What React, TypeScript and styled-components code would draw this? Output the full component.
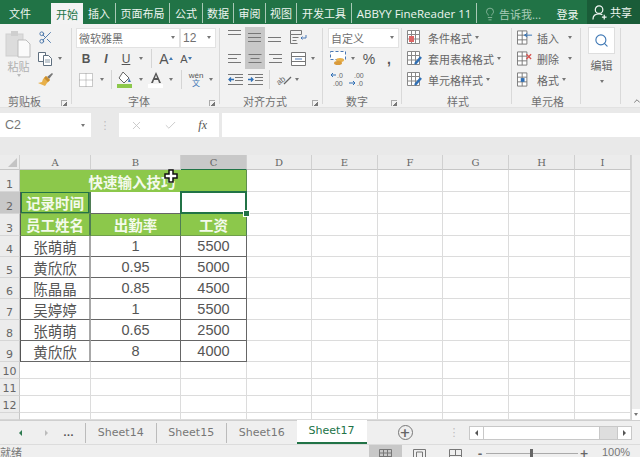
import React from 'react';
import styled, { createGlobalStyle } from 'styled-components';
import { Lightbulb, Scissors, Search, X, Check, ChevronUp } from 'lucide-react';

const CJK = '"Noto Sans CJK SC", "Liberation Sans", sans-serif';
const LATIN = '"DejaVu Sans", "Noto Sans CJK SC", sans-serif';
const GREEN = '#217346';
const FILL = '#8cc84b';

const GlobalStyle = createGlobalStyle`
  html, body { margin: 0; padding: 0; background: #fff; overflow: hidden; }
  #root { width: 640px; height: 457px; overflow: hidden; }
`;

const Page = styled.div`
  width: 640px;
  height: 457px;
  overflow: hidden;
  display: flex;
  flex-direction: column;
  font-family: ${CJK};
  color: #444;
`;

/* title bar */
const TitleBar = styled.div`
  height: 24px;
  flex: none;
  background: ${GREEN};
  display: flex;
  align-items: flex-end;
  color: #eef5f0;
  font-size: 11px;
`;
const MenuTab = styled.div<{ $w: number; $active?: boolean; $sep?: boolean }>`
  width: ${p => p.$w}px;
  flex: none;
  height: ${p => (p.$active ? 21 : 20)}px;
  margin-bottom: ${p => (p.$active ? 0 : 1)}px;
  display: flex;
  align-items: center;
  justify-content: center;
  box-sizing: border-box;
  white-space: nowrap;
  border-right: ${p => (p.$sep ? '1px solid #a9c9b6' : 'none')};
  background: ${p => (p.$active ? '#f3f3f3' : 'transparent')};
  color: ${p => (p.$active ? GREEN : 'inherit')};
`;
const AbbyyLabel = styled.span`
  font-family: "Open Sans", sans-serif;
  font-size: 11.5px;
`;
const TellMe = styled.div`
  width: 74px;
  flex: none;
  height: 21px;
  display: flex;
  align-items: center;
  gap: 2px;
  padding-left: 6px;
  box-sizing: border-box;
  color: #a9cdb8;
`;
const Login = styled.div`
  width: 33px;
  flex: none;
  height: 21px;
  display: flex;
  align-items: center;
  justify-content: center;
`;
const Share = styled.div`
  margin-left: auto;
  width: 53px;
  height: 24px;
  box-sizing: border-box;
  padding-left: 5px;
  background: #1a5c38;
  display: flex;
  align-items: center;
  gap: 2px;
`;

/* ribbon */
const Ribbon = styled.div`
  height: 84px;
  flex: none;
  background: #f2f2f2;
  display: flex;
  border-bottom: 1px solid #e2e2e2;
  box-sizing: border-box;
`;
const Group = styled.section<{ $w: number; $pad: number }>`
  width: ${p => p.$w}px;
  flex: none;
  box-sizing: border-box;
  padding-left: ${p => p.$pad}px;
  display: flex;
  flex-direction: column;
  position: relative;
  &::after {
    content: '';
    position: absolute;
    right: 0;
    top: 4px;
    bottom: 3px;
    width: 1px;
    background: #d9d9d9;
  }
`;
const GroupBody = styled.div`
  height: 66px;
  padding-top: 3px;
  display: flex;
  flex: none;
`;
const Stack = styled.div`
  display: flex;
  flex-direction: column;
`;
const ToolRow = styled.div<{ $h?: number }>`
  display: flex;
  align-items: center;
  height: ${p => p.$h ?? 21}px;
`;
const Tool = styled.div<{ $w: number; $on?: boolean }>`
  width: ${p => p.$w}px;
  height: 100%;
  flex: none;
  display: flex;
  align-items: center;
  justify-content: center;
  background: ${p => (p.$on ? '#c8c8c8' : 'transparent')};
  color: #555;
  font-size: 12px;
`;
const Letter = styled.span<{ $bold?: boolean; $italic?: boolean; $under?: boolean; $size?: number }>`
  font-family: "Liberation Sans", sans-serif;
  font-size: ${p => p.$size ?? 12}px;
  font-weight: ${p => (p.$bold ? 700 : 400)};
  font-style: ${p => (p.$italic ? 'italic' : 'normal')};
  text-decoration: ${p => (p.$under ? 'underline' : 'none')};
  color: #555;
`;
const PhoneticLetter = styled.span`
  font-family: "Liberation Sans", "Noto Sans CJK SC", sans-serif;
  font-size: 8px;
  line-height: 8px;
  text-align: center;
  color: #555;
`;
const PhoneticBase = styled.span`
  display: block;
  color: #3f78b5;
`;
const Caret = styled.i<{ $up?: boolean; $color?: string }>`
  display: block;
  width: 0;
  height: 0;
  border-left: 2.5px solid transparent;
  border-right: 2.5px solid transparent;
  ${p =>
    p.$up
      ? `border-bottom: 3px solid ${p.$color ?? '#777'};`
      : `border-top: 3px solid ${p.$color ?? '#777'};`}
`;
const ToolSep = styled.div`
  width: 1px;
  height: 19px;
  background: #d5d5d5;
`;
const ComboBox = styled.div<{ $w: number }>`
  width: ${p => p.$w}px;
  height: 20px;
  flex: none;
  box-sizing: border-box;
  background: #fff;
  border: 1px solid #e2e2e2;
  display: flex;
  align-items: center;
  justify-content: space-between;
  padding: 0 4px 0 2px;
  font-size: 11px;
  color: #707070;
`;
const SizeValue = styled.span`
  font-family: "Liberation Sans", sans-serif;
  font-size: 12px;
`;
const GroupLabel = styled.div<{ $left: number }>`
  display: grid;
  grid-template-columns: ${p => p.$left}px auto 1fr;
  align-items: center;
  height: 16px;
  font-size: 11px;
  color: #707070;
`;
const Launcher = styled.i`
  grid-column: 3;
  justify-self: end;
  display: block;
  width: 5px;
  height: 5px;
  margin: 3px 5px 0 0;
  border-left: 1px solid #aaa;
  border-top: 1px solid #aaa;
  background: linear-gradient(135deg, transparent 55%, #777 55%);
`;
const PasteColumn = styled.div`
  width: 33px;
  flex: none;
  display: flex;
  flex-direction: column;
  align-items: center;
  color: #b0b0b0;
  font-size: 11px;
  line-height: 14px;
  padding-top: 3px;
  gap: 1px;
`;
const CommandRow = styled(ToolRow)`
  font-size: 11px;
  color: #666;
`;
const CommandIcon = styled.div<{ $w: number; $gap: number }>`
  width: ${p => p.$w}px;
  margin-right: ${p => p.$gap}px;
  flex: none;
  display: flex;
  justify-content: center;
`;
const CommandCaret = styled.div<{ $left: number }>`
  margin-left: ${p => p.$left}px;
`;
const EditColumn = styled.div`
  width: 27px;
  flex: none;
  display: flex;
  flex-direction: column;
  align-items: center;
  font-size: 11px;
  color: #666;
`;
const EditButton = styled.div`
  width: 27px;
  height: 27px;
  box-sizing: border-box;
  background: #fff;
  border: 1px solid #dedede;
  display: flex;
  align-items: center;
  justify-content: center;
  margin-bottom: 3px;
`;
const EditCaret = styled.div`
  margin-top: 7px;
`;
const CollapseCell = styled.div`
  flex: 1;
  display: flex;
  align-items: flex-end;
  justify-content: center;
  padding-bottom: 1px;
  padding-left: 11px;
`;

/* formula bar */
const FormulaBar = styled.div`
  height: 47px;
  flex: none;
  box-sizing: border-box;
  padding: 5px 0 0;
  background: #e9e9e9;
  display: flex;
  align-items: flex-start;
`;
const NameBox = styled.div`
  width: 91px;
  height: 24px;
  flex: none;
  box-sizing: border-box;
  background: #fff;
  display: flex;
  align-items: center;
  justify-content: space-between;
  padding: 0 6px 0 5px;
  font-family: "Liberation Sans", sans-serif;
  font-size: 12.5px;
  color: #777;
`;
const Grip = styled.div`
  width: 28px;
  height: 24px;
  flex: none;
  display: flex;
  align-items: center;
  justify-content: center;
  color: #bbb;
  font-size: 11px;
  font-family: ${LATIN};
`;
const FxBox = styled.div`
  width: 100px;
  height: 24px;
  flex: none;
  background: #fff;
  display: flex;
  align-items: center;
  justify-content: space-between;
  box-sizing: border-box;
  padding: 0 12px 0 11px;
`;
const FxLabel = styled.span`
  font-family: "Liberation Serif", serif;
  font-style: italic;
  font-size: 12px;
  color: #555;
`;
const FormulaInput = styled.div`
  flex: 1;
  height: 24px;
  margin-left: 3px;
  background: #fff;
`;

/* sheet */
const SheetArea = styled.div`
  display: flex;
  height: 265px;
  flex: none;
`;
const SheetGrid = styled.div`
  width: 631px;
  flex: none;
  position: relative;
  display: grid;
  grid-template-columns: 20px 71px 90px 66px 65px 66px 65px 66px 66px 56px;
  grid-template-rows: 15px 22px 22px 22px repeat(6, 21px) 17px 17px 17px 7px;
  overflow: hidden;
  background: #fff;
`;
const ColHead = styled.div<{ $on?: boolean }>`
  box-sizing: border-box;
  background: ${p => (p.$on ? '#c8c8c8' : '#ececec')};
  border-right: 1px solid #d0d0d0;
  border-bottom: ${p => (p.$on ? `1px solid ${GREEN}` : '1px solid #c6c6c6')};
  display: flex;
  align-items: center;
  justify-content: center;
  font-family: "DejaVu Serif", serif;
  font-size: 10px;
  color: #666;
`;
const Corner = styled(ColHead)`
  justify-content: flex-end;
  align-items: flex-end;
  padding: 0 2px 2px 0;
`;
const CornerMark = styled.i`
  display: block;
  width: 0;
  height: 0;
  border-left: 9px solid transparent;
  border-bottom: 9px solid #c4c4c4;
`;
const RowHead = styled.div<{ $on?: boolean; $clipped?: boolean }>`
  box-sizing: border-box;
  background: ${p => (p.$on ? '#c8c8c8' : '#ececec')};
  border-right: 1px solid #c6c6c6;
  border-bottom: 1px solid #d6d6d6;
  display: flex;
  align-items: ${p => (p.$clipped ? 'flex-start' : 'flex-end')};
  padding-top: ${p => (p.$clipped ? 4 : 0)}px;
  justify-content: center;
  overflow: hidden;
  font-family: ${LATIN};
  font-size: 11px;
  line-height: 13px;
  color: #666;
`;
const Blank = styled.div`
  box-sizing: border-box;
  border-right: 1px solid #dcdcdc;
  border-bottom: 1px solid #dcdcdc;
`;
const Merged = styled.div`
  grid-column: 2 / span 3;
  box-sizing: border-box;
  background: ${FILL};
  border-right: 1px solid #5f8f4c;
  color: #f4faec;
  font-size: 14.5px;
  font-weight: 700;
  display: flex;
  align-items: center;
  justify-content: center;
  padding-right: 2px;
`;
const Cell = styled.div<{ $head?: boolean; $selected?: boolean; $current?: boolean }>`
  box-sizing: border-box;
  position: relative;
  display: flex;
  align-items: center;
  justify-content: center;
  font-size: 14.5px;
  font-family: "Liberation Sans", "Noto Sans CJK SC", sans-serif;
  white-space: nowrap;
  background: ${p => (p.$head ? FILL : '#fff')};
  color: ${p => (p.$head ? '#f4faec' : '#555')};
  font-weight: ${p => (p.$head ? 700 : 400)};
  border-right: 1px solid ${p => (p.$head ? '#4f7d55' : '#666')};
  border-bottom: 1px solid ${p => (p.$head ? '#6f9f4a' : '#666')};
  ${p => p.$current && `box-shadow: inset 0 0 0 1px ${GREEN};`}
  ${p =>
    p.$selected &&
    `&::before {
      content: '';
      position: absolute;
      inset: -1px -1px -1px -1px;
      border: 2px solid ${GREEN};
      z-index: 1;
    }`}
`;
const FirstCell = styled(Cell)`
  border-left: 1px solid #555;
  border-right: 2px solid ${p => (p.$head ? '#4f7d55' : '#a8a8a8')};
`;
const FillHandle = styled.i`
  position: absolute;
  right: -4px;
  bottom: -4px;
  width: 5px;
  height: 5px;
  background: ${GREEN};
  border: 1px solid #fff;
  box-sizing: content-box;
  z-index: 2;
`;
const CursorMark = styled.svg`
  position: absolute;
  left: 164px;
  top: 14px;
  z-index: 3;
`;
const VScroll = styled.div`
  flex: 1;
  background: #ececec;
  border-left: 1px solid #d4d4d4;
  display: flex;
  align-items: flex-end;
`;
const VScrollButton = styled.div`
  width: 100%;
  height: 11px;
  background: #fff;
  display: flex;
  justify-content: center;
  align-items: center;
`;

/* sheet tabs */
const TabsBar = styled.div`
  height: 25px;
  flex: none;
  box-sizing: border-box;
  background: #efefef;
  border-top: 1px solid #cfcfcf;
  border-bottom: 1px solid #dcdcdc;
  display: flex;
  align-items: center;
  font-family: ${LATIN};
  font-size: 11px;
  color: #777;
`;
const NavCell = styled.div<{ $w: number }>`
  width: ${p => p.$w}px;
  flex: none;
  display: flex;
  justify-content: center;
  align-items: center;
  font-weight: 700;
  font-size: 9px;
  color: #555;
`;
const SideCaret = styled.i<{ $right?: boolean; $color?: string }>`
  display: block;
  width: 0;
  height: 0;
  border-top: 3px solid transparent;
  border-bottom: 3px solid transparent;
  ${p =>
    p.$right
      ? `border-left: 3px solid ${p.$color ?? '#555'};`
      : `border-right: 3px solid ${p.$color ?? '#555'};`}
`;
const SheetTab = styled.div<{ $active?: boolean }>`
  width: ${p => (p.$active ? 70 : 70.5)}px;
  height: ${p => (p.$active ? 24 : 20)}px;
  flex: none;
  box-sizing: border-box;
  display: flex;
  align-items: center;
  justify-content: center;
  border-left: ${p => (p.$active ? 'none' : '1px solid #bbb')};
  background: ${p => (p.$active ? '#fff' : 'transparent')};
  color: ${p => (p.$active ? GREEN : '#777')};
  border-bottom: ${p => (p.$active ? `2px solid ${GREEN}` : 'none')};
  margin-top: ${p => (p.$active ? -2 : 0)}px;
`;
const AddSheet = styled.div`
  width: 15px;
  height: 15px;
  flex: none;
  box-sizing: border-box;
  margin-left: 31px;
  border: 1px solid #777;
  border-radius: 50%;
  display: flex;
  align-items: center;
  justify-content: center;
  font-size: 13px;
  line-height: 1;
  font-weight: 700;
  color: #666;
`;
const TabGrip = styled.div`
  margin-left: 36px;
  width: 10px;
  flex: none;
  text-align: center;
  font-size: 11px;
  color: #bbb;
`;
const HScroll = styled.div`
  margin-left: 10px;
  width: 163px;
  height: 14px;
  flex: none;
  box-sizing: border-box;
  border: 1px solid #c8c8c8;
  background: #dedede;
  display: flex;
`;
const HScrollEnd = styled.div`
  width: 13px;
  flex: none;
  background: #fff;
  display: flex;
  align-items: center;
  justify-content: center;
`;
const HScrollThumb = styled.div`
  width: 117px;
  flex: none;
  background: #fff;
  border-left: 1px solid #c8c8c8;
  border-right: 1px solid #c8c8c8;
  box-sizing: border-box;
`;
const HScrollTrack = styled.div`
  flex: 1;
  border-right: 1px solid #c8c8c8;
`;

/* status bar */
const StatusBar = styled.div`
  flex: 1;
  background: #efefef;
  display: flex;
  align-items: flex-start;
  font-size: 11px;
  color: #777;
  overflow: hidden;
`;
const ReadyText = styled.div`
  width: 369px;
  flex: none;
  line-height: 14px;
`;
const ViewButton = styled.div<{ $on?: boolean; $w: number }>`
  width: ${p => p.$w}px;
  height: 12px;
  flex: none;
  background: ${p => (p.$on ? '#c8c8c8' : 'transparent')};
  display: flex;
  justify-content: center;
  padding-top: 4px;
  box-sizing: border-box;
`;
const ZoomSign = styled.div`
  width: 12px;
  flex: none;
  text-align: center;
  line-height: 18px;
  font-family: ${LATIN};
  font-weight: 700;
  color: #666;
`;
const ZoomTrack = styled.div`
  width: 92px;
  height: 10px;
  flex: none;
  position: relative;
  &::before {
    content: '';
    position: absolute;
    left: 0;
    right: 0;
    top: 8px;
    height: 1px;
    background: #aaa;
  }
`;
const ZoomThumb = styled.i`
  position: absolute;
  left: 44px;
  top: 4px;
  width: 3px;
  height: 9px;
  background: #666;
`;
const ZoomText = styled.div`
  margin-left: 12px;
  font-family: "Liberation Sans", sans-serif;
  font-size: 11px;
  line-height: 14px;
`;

/* drawn icons */
const PasteIcon = () => (
  <svg width="27" height="28" viewBox="0 0 27 28">
    <rect x="1" y="4" width="17" height="22" fill="#dcdcdc" stroke="#cfcfcf" />
    <rect x="6" y="1" width="7" height="5" fill="#cfcfcf" />
    <path d="M13 10h8l4 4v13H13z" fill="#fafafa" stroke="#bdbdbd" />
  </svg>
);
const CopyIcon = () => (
  <svg width="16" height="14" viewBox="0 0 16 14" fill="#fff" stroke="#5f6f7f">
    <path d="M1.500.5h7v9h-7z" />
    <path d="M6.500 3.500h5l3 3v7h-8z" />
    <path d="M8 8h5M8 10h5" stroke="#8a9aa8" />
  </svg>
);
const BrushIcon = () => (
  <svg width="17" height="16" viewBox="0 0 17 16">
    <path d="M10 5l2 2 4-5-1-1z" fill="#777" />
    <path d="M9 4l4 4-3 3-2 3-7-3 4-1 1-3z" fill="#e8b04a" />
    <path d="M9 4l4 4-2 2-4-4z" fill="#c98d2e" />
  </svg>
);
const GridIcon = () => (
  <svg width="14" height="14" viewBox="0 0 14 14" fill="#fff" stroke="#999" strokeDasharray="1 1">
    <path d="M.5.5h13v13H.5zM7 .5v13M.5 7h13" />
  </svg>
);
const FillIcon = () => (
  <svg width="16" height="17" viewBox="0 0 16 17">
    <path d="M6 1l6 6-5 5-5-5z" fill="#fff" stroke="#666" />
    <path d="M12 7l2 4h-3z" fill="#4a78b5" />
    <rect y="13" width="15" height="4" fill="#8cc84b" />
  </svg>
);
const FontColorIcon = () => (
  <svg width="16" height="17" viewBox="0 0 16 17">
    <path d="M8 1L3 12h2l1-3h4l1 3h2zM7 7l1-3 1 3z" fill="#555" />
    <rect y="13" width="15" height="4" fill="#fff" />
  </svg>
);
const Lines = ({ widths, ind = 0, y = 0 }: { widths: number[]; ind?: number; y?: number }) => (
  <svg width="14" height="11" viewBox="0 0 14 11" stroke="#777" style={{ transform: `translateY(${y}px)` }}>
    {widths.map((w, i) => (
      <path key={i} d={`M${ind === 1 ? 14 - w : ind === 2 ? (14 - w) / 2 : 0} ${1.5 + i * 4}h${w}`} />
    ))}
  </svg>
);
const WrapIcon = () => (
  <svg width="17" height="15" viewBox="0 0 17 15" fill="none" stroke="#777">
    <path d="M.5.5h11v4H.5zM.5 4.500v9h7M2.500 7.500h6M2.500 10.500h4" />
    <path d="M16 5v3h-5M12.500 6.500L11 8l1.500 1.500" stroke="#4a78b5" />
  </svg>
);
const MergeIcon = () => (
  <svg width="15" height="14" viewBox="0 0 15 14" fill="#fff" stroke="#777">
    <path d="M.5.5h14v13H.5zM.5 4.500h14M.5 9.500h14" />
    <path d="M4 7h7" stroke="#4a78b5" />
  </svg>
);
const IndentIcon = ({ out }: { out?: boolean }) => (
  <svg width="15" height="11" viewBox="0 0 15 11" fill="none" stroke="#777">
    <path d="M0 .5h15M7 3.500h8M7 6.500h8M0 10.500h15" />
    <path d={out ? 'M6 5.500H1M3 3.500l-2 2 2 2' : 'M0 5.500h5M3 3.500l2 2-2 2'} stroke="#2f6fb5" strokeWidth="1.300" />
  </svg>
);
const OrientIcon = () => (
  <svg width="17" height="15" viewBox="0 0 17 15">
    <text x="1" y="11" fontSize="8" fill="#666" fontFamily="Liberation Sans" transform="rotate(-40 6 8)">ab</text>
    <path d="M9 12L16 5" stroke="#666" strokeWidth="1.300" />
  </svg>
);
const AccountingIcon = () => (
  <svg width="16" height="15" viewBox="0 0 16 15">
    <rect x=".5" y=".5" width="15" height="8" fill="#fff" stroke="#4a78b5" strokeDasharray="3 2" />
    <ellipse cx="10" cy="9" rx="4" ry="2" fill="#e8b04a" />
    <ellipse cx="8" cy="12" rx="4" ry="2" fill="#d99a3a" />
  </svg>
);
const DecimalIcon = ({ less }: { less?: boolean }) => (
  <svg width="16" height="15" viewBox="0 0 16 15" fontFamily="Liberation Sans" fontSize="7" fill="#666">
    <text x={less ? 7 : 5} y="6">{less ? '.0' : '.00'}</text>
    <text x={less ? 3 : 8} y="14">{less ? '.00' : '.0'}</text>
    <path d={less ? 'M6 3H1M3 1L1 3l2 2' : 'M0 11h6M4 9l2 2-2 2'} fill="none" stroke="#2f6fb5" />
  </svg>
);
const TableStyleIcon = ({ brush }: { brush?: boolean }) => (
  <svg width="16" height="15" viewBox="0 0 16 15" fill="#fff" stroke="#888">
    <path d="M.5.500h12v13H.5zM.5 4.500h12M.5 9h12M4.500.5v13M8.500.5v13" />
    {brush ? <path d="M14 6l-6 7" stroke="#2f6fb5" strokeWidth="2.500" /> : <rect x="2" y="6" width="5" height="6" fill="#d66" stroke="none" />}
  </svg>
);
const CellsIcon = ({ mode }: { mode: 'in' | 'out' | 'fmt' }) => (
  <svg width="17" height="15" viewBox="0 0 17 15" fill="#fff" stroke="#777">
    <path d="M.5.500h10v14H.5zM.5 5h10M.5 10h10M5.500.5v14" />
    {mode === 'in' && <path d="M8 5h8M11 3L8 5l3 2" stroke="#2f6fb5" fill="none" />}
    {mode === 'out' && <path d="M10 3l5 5m0-5l-5 5" stroke="#d9534f" fill="none" strokeWidth="1.400" />}
    {mode === 'fmt' && <rect x="4" y="6" width="4" height="4" fill="#2f6fb5" stroke="none" />}
  </svg>
);
const ShareIcon = () => (
  <svg width="16" height="17" viewBox="0 0 17 17" fill="none" stroke="#f2f7f4" strokeWidth="1.300">
    <circle cx="7.500" cy="5.500" r="4" />
    <path d="M1 16c0-4 3-6 6.500-6 1.500 0 2.500.3 3.500 1M13 11v5M10.500 13.500h5" />
  </svg>
);
const ViewIcon = ({ kind }: { kind: 'normal' | 'page' | 'brk' }) => (
  <svg width="13" height="12" viewBox="0 0 13 12" fill="none" stroke="#777">
    <path d="M.5.500h12v11H.5z" />
    {kind === 'normal' && <path d="M.5 4h12M.5 7.500h12M4.500.5v11M8.500.5v11" />}
    {kind === 'page' && <path d="M3.500 3h6v8h-6z" />}
    {kind === 'brk' && <path d="M6.500.5v6M.5 6.500h12" />}
  </svg>
);

type RowData = [string, string, string];
const ROWS: RowData[] = [
  ['张萌萌', '1', '5500'],
  ['黄欣欣', '0.95', '5000'],
  ['陈晶晶', '0.85', '4500'],
  ['吴婷婷', '1', '5500'],
  ['张萌萌', '0.65', '2500'],
  ['黄欣欣', '8', '4000'],
];
const COLS = ['A', 'B', 'C', 'D', 'E', 'F', 'G', 'H', 'I'];

const blanks = (n: number, prefix: string) =>
  Array.from({ length: n }, (_, i) => <Blank key={`${prefix}-${i}`} />);

const App: React.FC = () => (
  <Page>
    <GlobalStyle />
    <TitleBar>
      <MenuTab $w={40}>文件</MenuTab>
      <MenuTab $w={11} />
      <MenuTab $w={32} $active>开始</MenuTab>
      <MenuTab $w={33} $sep>插入</MenuTab>
      <MenuTab $w={54} $sep>页面布局</MenuTab>
      <MenuTab $w={33} $sep>公式</MenuTab>
      <MenuTab $w={31} $sep>数据</MenuTab>
      <MenuTab $w={32} $sep>审阅</MenuTab>
      <MenuTab $w={31} $sep>视图</MenuTab>
      <MenuTab $w={55} $sep>开发工具</MenuTab>
      <MenuTab $w={125} $sep><AbbyyLabel>ABBYY FineReader 11</AbbyyLabel></MenuTab>
      <TellMe>
        <Lightbulb size={14} strokeWidth={1.2} />
        告诉我...
      </TellMe>
      <Login>登录</Login>
      <Share>
        <ShareIcon />
        共享
      </Share>
    </TitleBar>

    <Ribbon>
      <Group $w={72} $pad={2}>
        <GroupBody>
          <PasteColumn>
            <PasteIcon />
            粘贴
            <Caret $color="#bbb" />
          </PasteColumn>
          <Stack>
            <ToolRow><Tool $w={20}><Scissors size={15} color="#3f6ea5" strokeWidth={1.4} /></Tool></ToolRow>
            <ToolRow>
              <Tool $w={20}><CopyIcon /></Tool>
              <Tool $w={10}><Caret /></Tool>
            </ToolRow>
            <ToolRow><Tool $w={20}><BrushIcon /></Tool></ToolRow>
          </Stack>
        </GroupBody>
        <GroupLabel $left={6}><span />剪贴板<Launcher /></GroupLabel>
      </Group>

      <Group $w={148} $pad={4}>
        <GroupBody>
          <Stack>
            <ToolRow>
              <ComboBox $w={104}>微软雅黑<Caret /></ComboBox>
              <ComboBox $w={36}><SizeValue>12</SizeValue><Caret /></ComboBox>
            </ToolRow>
            <ToolRow>
              <Tool $w={20}><Letter $bold>B</Letter></Tool>
              <Tool $w={20}><Letter $italic $bold>I</Letter></Tool>
              <Tool $w={20}><Letter $under>U</Letter></Tool>
              <Tool $w={10}><Caret /></Tool>
              <Tool $w={10}><ToolSep /></Tool>
              <Tool $w={20}><Letter $size={14}>A</Letter><Caret $up $color="#3f7ab5" /></Tool>
              <Tool $w={20}><Letter $size={11}>A</Letter><Caret $color="#3f7ab5" /></Tool>
            </ToolRow>
            <ToolRow>
              <Tool $w={20}><GridIcon /></Tool>
              <Tool $w={12}><Caret /></Tool>
              <Tool $w={6}><ToolSep /></Tool>
              <Tool $w={22}><FillIcon /></Tool>
              <Tool $w={10}><Caret /></Tool>
              <Tool $w={20}><FontColorIcon /></Tool>
              <Tool $w={10}><Caret /></Tool>
              <Tool $w={10}><ToolSep /></Tool>
              <Tool $w={20}><PhoneticLetter>wén<PhoneticBase>文</PhoneticBase></PhoneticLetter></Tool>
              <Tool $w={10}><Caret /></Tool>
            </ToolRow>
          </Stack>
        </GroupBody>
        <GroupLabel $left={52}><span />字体<Launcher /></GroupLabel>
      </Group>

      <Group $w={103} $pad={5}>
        <GroupBody>
          <Stack>
            <ToolRow>
              <Tool $w={20}><Lines widths={[13, 13]} y={-3} /></Tool>
              <Tool $w={20} $on><Lines widths={[13, 13, 13]} /></Tool>
              <Tool $w={20}><Lines widths={[13, 13]} y={4} /></Tool>
              <Tool $w={3} />
              <Tool $w={20}><WrapIcon /></Tool>
            </ToolRow>
            <ToolRow>
              <Tool $w={20}><Lines widths={[13, 9, 13]} /></Tool>
              <Tool $w={20} $on><Lines widths={[13, 9, 13]} ind={2} /></Tool>
              <Tool $w={20}><Lines widths={[13, 9, 13]} ind={1} /></Tool>
              <Tool $w={3} />
              <Tool $w={20}><MergeIcon /></Tool>
              <Tool $w={10}><Caret /></Tool>
            </ToolRow>
            <ToolRow>
              <Tool $w={20}><IndentIcon out /></Tool>
              <Tool $w={20}><IndentIcon /></Tool>
              <Tool $w={8}><ToolSep /></Tool>
              <Tool $w={20}><OrientIcon /></Tool>
              <Tool $w={8}><Caret /></Tool>
            </ToolRow>
          </Stack>
        </GroupBody>
        <GroupLabel $left={18}><span />对齐方式<Launcher /></GroupLabel>
      </Group>

      <Group $w={79} $pad={5}>
        <GroupBody>
          <Stack>
            <ToolRow><ComboBox $w={71}>自定义<Caret /></ComboBox></ToolRow>
            <ToolRow>
              <Tool $w={20}><AccountingIcon /></Tool>
              <Tool $w={10}><Caret /></Tool>
              <Tool $w={22}><Letter $size={14}>%</Letter></Tool>
              <Tool $w={18}><Letter $bold $size={14}>,</Letter></Tool>
            </ToolRow>
            <ToolRow>
              <Tool $w={19}><DecimalIcon less /></Tool>
              <Tool $w={20}><DecimalIcon /></Tool>
            </ToolRow>
          </Stack>
        </GroupBody>
        <GroupLabel $left={18}><span />数字<Launcher /></GroupLabel>
      </Group>

      <Group $w={110} $pad={2}>
        <GroupBody>
          <Stack>
            <CommandRow>
              <CommandIcon $w={22} $gap={2}><TableStyleIcon /></CommandIcon>
              条件格式
              <CommandCaret $left={3}><Caret /></CommandCaret>
            </CommandRow>
            <CommandRow>
              <CommandIcon $w={22} $gap={2}><TableStyleIcon brush /></CommandIcon>
              套用表格格式
              <CommandCaret $left={3}><Caret /></CommandCaret>
            </CommandRow>
            <CommandRow>
              <CommandIcon $w={22} $gap={2}><TableStyleIcon brush /></CommandIcon>
              单元格样式
              <CommandCaret $left={3}><Caret /></CommandCaret>
            </CommandRow>
          </Stack>
        </GroupBody>
        <GroupLabel $left={43}><span />样式<span /></GroupLabel>
      </Group>

      <Group $w={69} $pad={5}>
        <GroupBody>
          <Stack>
            <CommandRow>
              <CommandIcon $w={16} $gap={4}><CellsIcon mode="in" /></CommandIcon>
              插入
              <CommandCaret $left={9}><Caret /></CommandCaret>
            </CommandRow>
            <CommandRow>
              <CommandIcon $w={16} $gap={4}><CellsIcon mode="out" /></CommandIcon>
              删除
              <CommandCaret $left={9}><Caret /></CommandCaret>
            </CommandRow>
            <CommandRow>
              <CommandIcon $w={16} $gap={4}><CellsIcon mode="fmt" /></CommandIcon>
              格式
              <CommandCaret $left={3}><Caret /></CommandCaret>
            </CommandRow>
          </Stack>
        </GroupBody>
        <GroupLabel $left={14}><span />单元格<span /></GroupLabel>
      </Group>

      <Group $w={40} $pad={7}>
        <GroupBody>
          <EditColumn>
            <EditButton><Search size={15} color="#3f78b5" strokeWidth={1.8} /></EditButton>
            编辑
            <EditCaret><Caret /></EditCaret>
          </EditColumn>
        </GroupBody>
      </Group>
      <CollapseCell><ChevronUp size={10} color="#666" /></CollapseCell>
    </Ribbon>

    <FormulaBar>
      <NameBox>C2<Caret /></NameBox>
      <Grip>⋮</Grip>
      <FxBox>
        <X size={13} color="#c4c4c4" strokeWidth={1.6} />
        <Check size={13} color="#c4c4c4" strokeWidth={1.6} />
        <FxLabel>fx</FxLabel>
      </FxBox>
      <FormulaInput />
    </FormulaBar>

    <SheetArea>
      <SheetGrid>
        <Corner><CornerMark /></Corner>
        {COLS.map(c => <ColHead key={c} $on={c === 'C'}>{c}</ColHead>)}

        <RowHead>1</RowHead>
        <Merged>快速输入技巧</Merged>
        {blanks(6, 'r1')}

        <RowHead $on>2</RowHead>
        <FirstCell $head $current>记录时间</FirstCell>
        <Cell />
        <Cell $selected><FillHandle /></Cell>
        {blanks(6, 'r2')}

        <RowHead>3</RowHead>
        <FirstCell $head>员工姓名</FirstCell>
        <Cell $head>出勤率</Cell>
        <Cell $head>工资</Cell>
        {blanks(6, 'r3')}

        {ROWS.map((row, i) => (
          <React.Fragment key={i}>
            <RowHead>{i + 4}</RowHead>
            <FirstCell>{row[0]}</FirstCell>
            <Cell>{row[1]}</Cell>
            <Cell>{row[2]}</Cell>
            {blanks(6, `d${i}`)}
          </React.Fragment>
        ))}

        {[10, 11, 12, 13].map(n => (
          <React.Fragment key={n}>
            <RowHead $clipped={n === 13}>{n}</RowHead>
            {blanks(9, `e${n}`)}
          </React.Fragment>
        ))}

        <CursorMark width="14" height="14" viewBox="0 0 14 14">
          <path d="M5 1h4v4h4v4H9v4H5V9H1V5h4z" fill="#fff" stroke="#111" strokeWidth="1.500" />
        </CursorMark>
      </SheetGrid>
      <VScroll>
        <VScrollButton><Caret /></VScrollButton>
      </VScroll>
    </SheetArea>

    <TabsBar>
      <NavCell $w={40}><SideCaret $color="#2d7a50" /></NavCell>
      <NavCell $w={12}><SideCaret $right $color="#bbb" /></NavCell>
      <NavCell $w={33}>...</NavCell>
      <SheetTab>Sheet14</SheetTab>
      <SheetTab>Sheet15</SheetTab>
      <SheetTab>Sheet16</SheetTab>
      <SheetTab $active>Sheet17</SheetTab>
      <AddSheet>+</AddSheet>
      <TabGrip>⋮</TabGrip>
      <HScroll>
        <HScrollEnd><SideCaret /></HScrollEnd>
        <HScrollThumb />
        <HScrollTrack />
        <HScrollEnd><SideCaret $right /></HScrollEnd>
      </HScroll>
    </TabsBar>

    <StatusBar>
      <ReadyText>就绪</ReadyText>
      <ViewButton $w={33} $on><ViewIcon kind="normal" /></ViewButton>
      <ViewButton $w={35}><ViewIcon kind="page" /></ViewButton>
      <ViewButton $w={37}><ViewIcon kind="brk" /></ViewButton>
      <ZoomSign>-</ZoomSign>
      <ZoomTrack><ZoomThumb /></ZoomTrack>
      <ZoomSign>+</ZoomSign>
      <ZoomText>100%</ZoomText>
    </StatusBar>
  </Page>
);

export default App;
